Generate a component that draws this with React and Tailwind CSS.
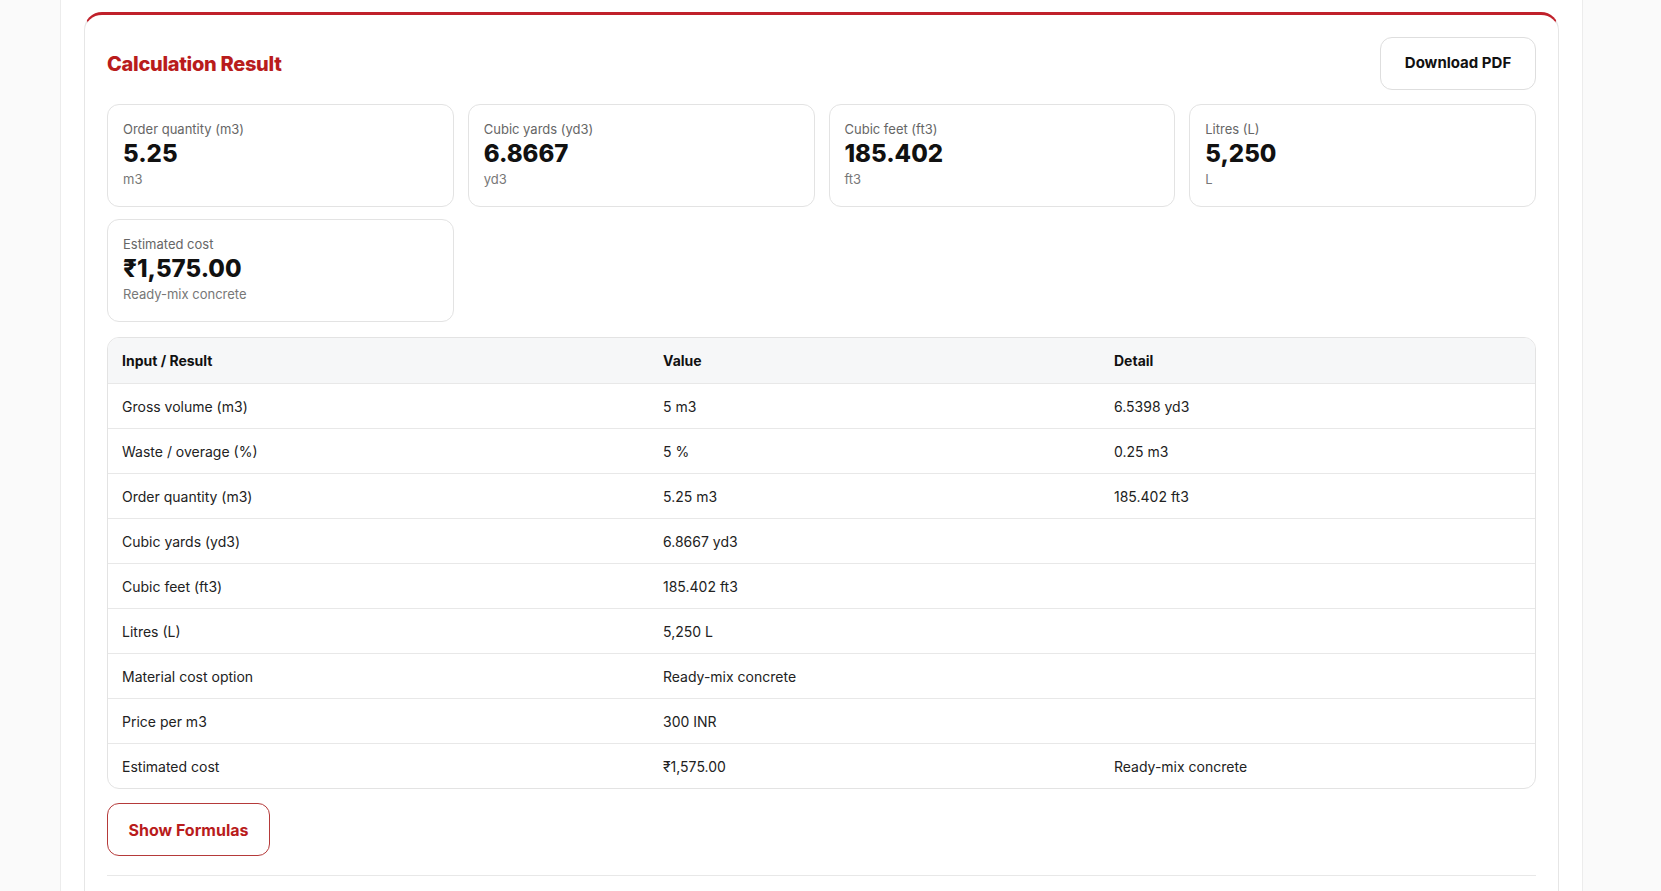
export default function App() {
  const stats = [
    ["Order quantity (m3)", "5.25", "m3"],
    ["Cubic yards (yd3)", "6.8667", "yd3"],
    ["Cubic feet (ft3)", "185.402", "ft3"],
    ["Litres (L)", "5,250", "L"],
    ["Estimated cost", "₹1,575.00", "Ready-mix concrete"],
  ];
  const rows = [
    ["Gross volume (m3)", "5 m3", "6.5398 yd3"],
    ["Waste / overage (%)", "5 %", "0.25 m3"],
    ["Order quantity (m3)", "5.25 m3", "185.402 ft3"],
    ["Cubic yards (yd3)", "6.8667 yd3", ""],
    ["Cubic feet (ft3)", "185.402 ft3", ""],
    ["Litres (L)", "5,250 L", ""],
    ["Material cost option", "Ready-mix concrete", ""],
    ["Price per m3", "300 INR", ""],
    ["Estimated cost", "₹1,575.00", "Ready-mix concrete"],
  ];
  return (
    <div className="min-h-[891px] bg-[#fafafa] pl-[60px] pr-[78px] overflow-hidden" style={{ fontFamily: "Inter, 'Noto Sans', sans-serif" }}>
      <div className="bg-white border-x border-[#ececec] min-h-[891px] pt-[12px] px-[23px]">
        <div className="border border-[#e6e6e6] border-t-[3px] border-t-[#c0202a] rounded-t-[18px] px-[22px] pt-[22px] h-[900px]">
          <div className="flex justify-between items-center">
            <h2 className="text-[20px] font-extrabold text-[#b91c1c] tracking-[-0.3px]">Calculation Result</h2>
            <button className="h-[53px] w-[156px] border border-[#dedede] rounded-[12px] text-[15px] font-bold text-[#111]">Download PDF</button>
          </div>
          <div className="grid grid-cols-4 gap-x-[14px] gap-y-[12px] mt-[14px]">
            {stats.map(([l, v, u]) => (
              <div key={l + v} className="border border-[#e3e3e3] rounded-[12px] h-[103px] px-[15px] pt-[15px]">
                <div className="text-[13px] text-[#666] leading-[18px]">{l}</div>
                <div className="text-[24px] font-extrabold text-[#111] leading-[32px]">{v}</div>
                <div className="text-[13px] text-[#777] leading-[18px]">{u}</div>
              </div>
            ))}
          </div>
          <div className="mt-[15px] border border-[#e3e3e3] rounded-[12px] overflow-hidden text-[14px] text-[#222]">
            <div className="grid grid-cols-[541px_451px_1fr] bg-[#f6f7f8] h-[45px] items-center px-[14px] font-bold text-[#111]">
              <div>Input / Result</div><div>Value</div><div>Detail</div>
            </div>
            {rows.map((r) => (
              <div key={r[0] + r[1]} className="grid grid-cols-[541px_451px_1fr] h-[45px] items-center px-[14px] border-t border-[#e8e8e8]">
                <div>{r[0]}</div><div>{r[1]}</div><div>{r[2]}</div>
              </div>
            ))}
          </div>
          <button className="mt-[14px] h-[53px] w-[163px] border border-[#b53a3a] rounded-[12px] text-[16px] font-bold text-[#b91c1c]">Show Formulas</button>
          <div className="mt-[19px] border-t border-[#e8e8e8]"></div>
        </div>
      </div>
    </div>
  );
}
